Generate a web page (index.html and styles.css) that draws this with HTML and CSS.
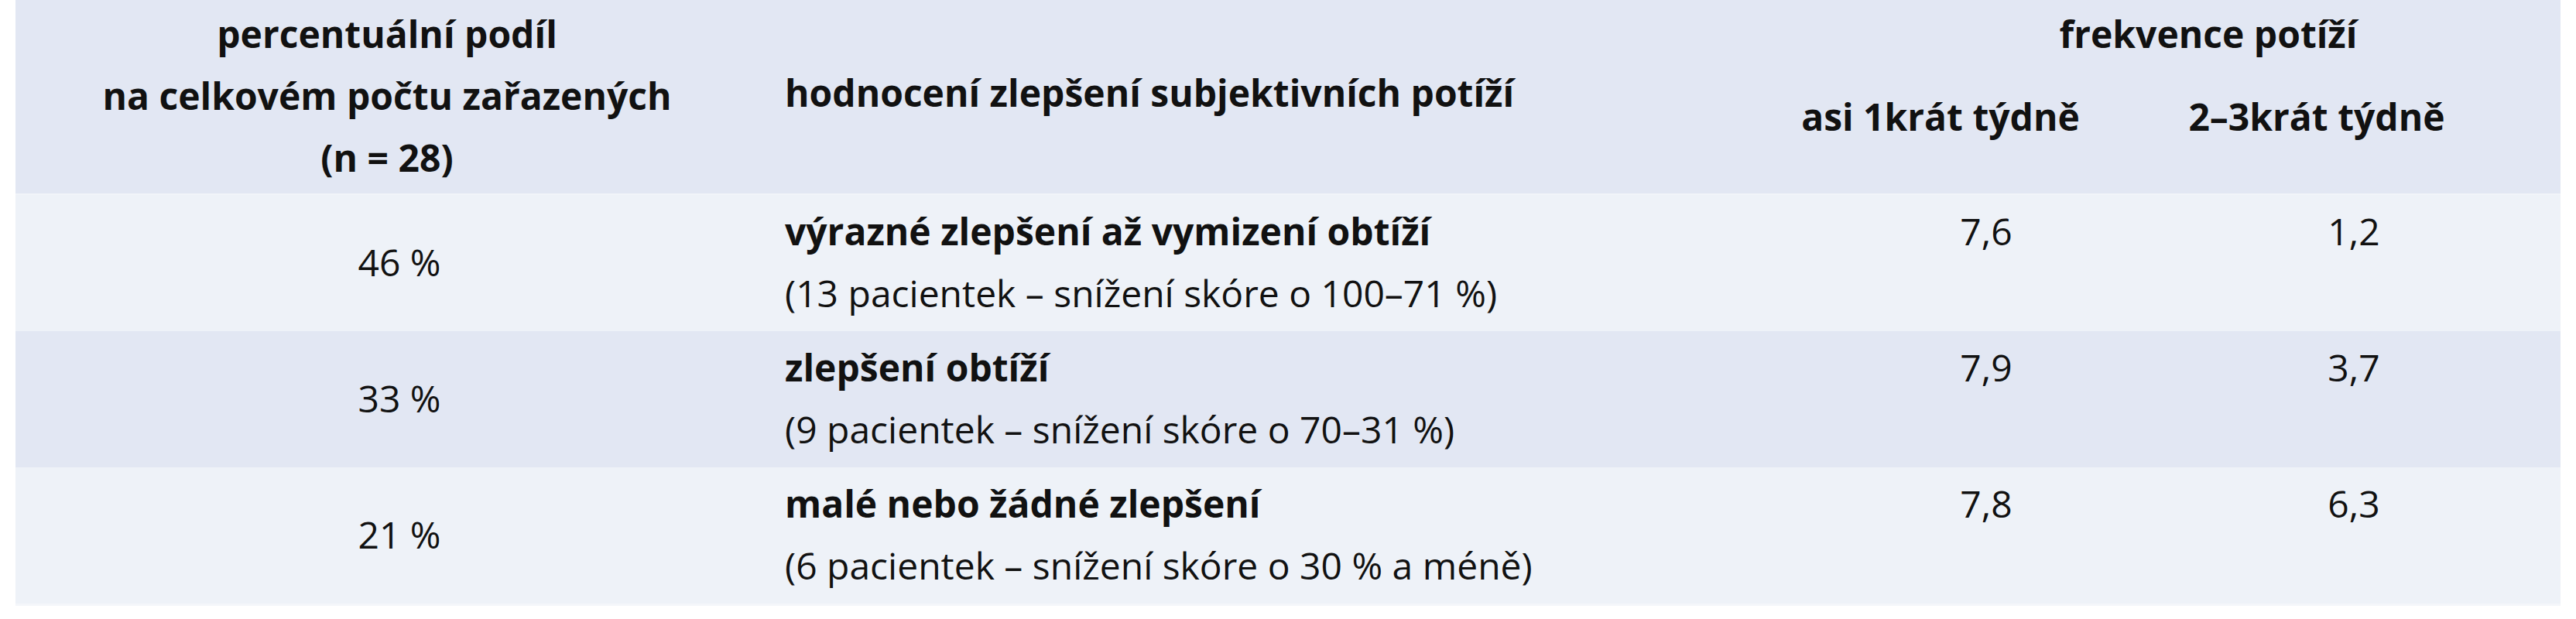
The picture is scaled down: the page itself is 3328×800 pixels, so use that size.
FILE: index.html
```html
<!DOCTYPE html>
<html lang="cs">
<head>
<meta charset="utf-8">
<title>Hodnocení zlepšení</title>
<link rel="stylesheet" href="styles.css">
</head>
<body>
<table class="results">
  <colgroup>
    <col class="c-share">
    <col class="c-eval">
    <col class="c-freq1">
    <col class="c-freq2">
  </colgroup>
  <thead>
    <tr class="head-a">
      <th rowspan="2" class="h-share">percentuální podíl<br>na celkovém počtu zařazených<br>(n = 28)</th>
      <th rowspan="2" class="h-eval">hodnocení zlepšení subjektivních potíží</th>
      <th colspan="2" class="h-freq">frekvence potíží</th>
    </tr>
    <tr class="head-b">
      <th class="h-sub h-sub1">asi 1krát týdně</th>
      <th class="h-sub h-sub2">2–3krát týdně</th>
    </tr>
  </thead>
  <tbody>
    <tr class="row light first">
      <td class="share">46 %</td>
      <td class="eval"><span class="eval-title">výrazné zlepšení až vymizení obtíží</span><br>(13 pacientek – snížení skóre o 100–71 %)</td>
      <td class="num num1">7,6</td>
      <td class="num num2">1,2</td>
    </tr>
    <tr class="row dark">
      <td class="share">33 %</td>
      <td class="eval"><span class="eval-title">zlepšení obtíží</span><br>(9 pacientek – snížení skóre o 70–31 %)</td>
      <td class="num num1">7,9</td>
      <td class="num num2">3,7</td>
    </tr>
    <tr class="row light last">
      <td class="share">21 %</td>
      <td class="eval"><span class="eval-title">malé nebo žádné zlepšení</span><br>(6 pacientek – snížení skóre o 30 % a méně)</td>
      <td class="num num1">7,8</td>
      <td class="num num2">6,3</td>
    </tr>
  </tbody>
</table>
</body>
</html>
```
FILE: styles.css
```css
html, body {
  margin: 0;
  padding: 0;
  background: #ffffff;
}

body {
  padding: 0 20px;
  font-family: "Open Sans", "Noto Sans", sans-serif;
  font-size: 48px;
  line-height: 80px;
  color: #111111;
}

.results {
  width: 3288px;
  border-collapse: collapse;
  table-layout: fixed;
}

.c-share { width: 960px; }
.c-eval { width: 1256px; }
.c-freq1 { width: 580px; }
.c-freq2 { width: 492px; }

th, td {
  padding: 0;
  margin: 0;
}

thead th {
  background: #e2e7f3;
  font-weight: 700;
}

.h-share {
  text-align: center;
  vertical-align: top;
  padding: 4px 0 6px 0;
}

.h-eval {
  text-align: left;
  vertical-align: top;
  padding: 80px 0 0 34px;
}

.h-freq {
  text-align: center;
  vertical-align: top;
  padding: 4px 0 0 162px;
  height: 80px;
}

.h-sub {
  text-align: center;
  vertical-align: top;
  padding-top: 27px;
  padding-bottom: 59px;
}

.h-sub1 { padding-right: 38px; }
.h-sub2 { padding-right: 138px; }

.row td {
  padding-top: 7px;
  padding-bottom: 9px;
  vertical-align: top;
}

.row.light { background: #eef2f8; }
.row.dark { background: #e2e7f3; }

.row.first td { border-top: 2px solid #f1f4f9; }
.row.last td { border-bottom: 3px solid #f4f6fa; }

.row td.share {
  text-align: center;
  vertical-align: middle;
  padding-left: 32px;
}

.row td.eval {
  text-align: left;
  padding-left: 34px;
}

.eval-title {
  font-weight: 700;
}

.row td.num {
  text-align: center;
}

.row td.num1 { padding-left: 80px; }
.row td.num2 { padding-right: 42px; }
```
